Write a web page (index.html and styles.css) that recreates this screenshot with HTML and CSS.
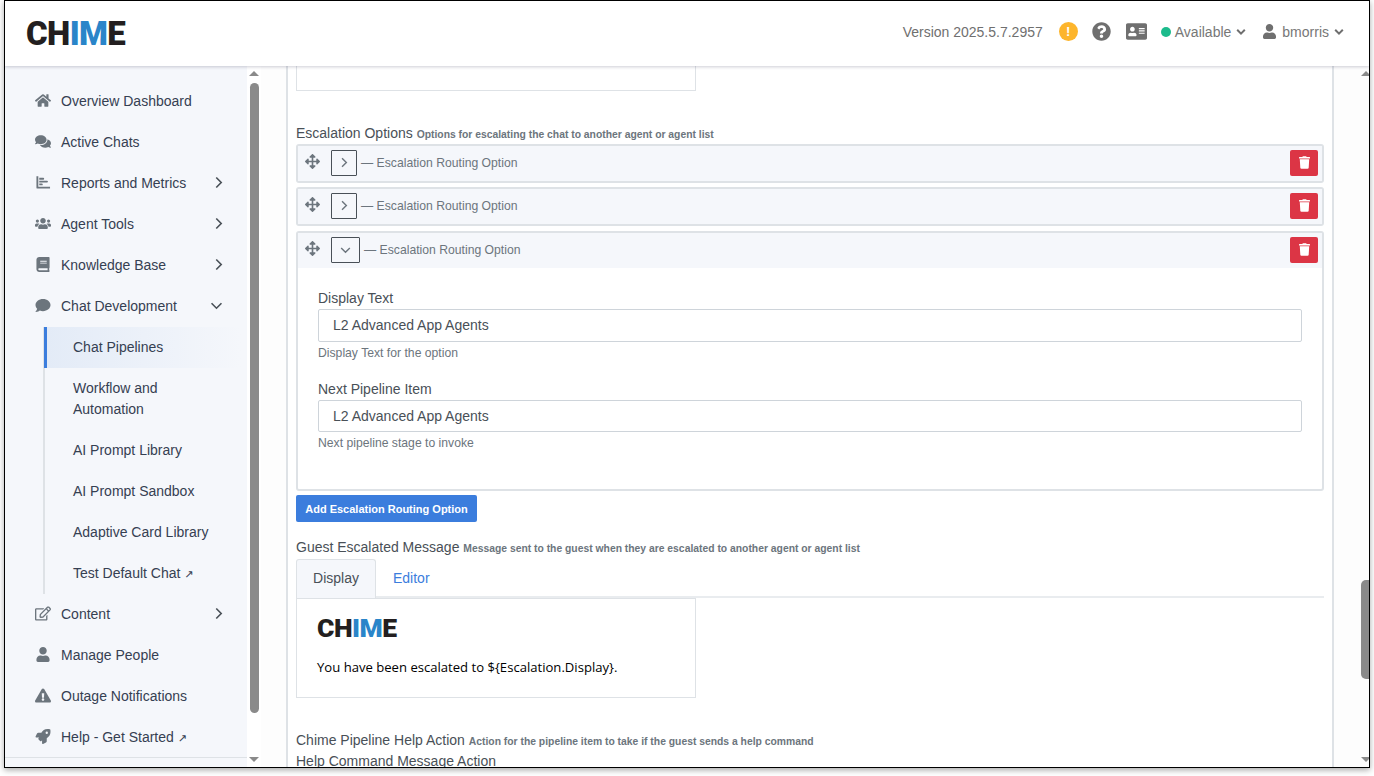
FILE: index.html
```html
<!DOCTYPE html>
<html lang="en">
<head>
<meta charset="utf-8">
<title>Chime</title>
<link rel="stylesheet" href="styles.css">
</head>
<body>
<svg class="defs" aria-hidden="true">
<symbol id="i-home" viewBox="0 0 576 512"><path d="M280.37 148.26L96 300.11V464a16 16 0 0 0 16 16l112.06-.29a16 16 0 0 0 15.92-16V368a16 16 0 0 1 16-16h64a16 16 0 0 1 16 16v95.64a16 16 0 0 0 16 16.05L464 480a16 16 0 0 0 16-16V300L295.67 148.26a12.19 12.19 0 0 0-15.3 0zM571.6 251.47L488 182.56V44.05a12 12 0 0 0-12-12h-56a12 12 0 0 0-12 12v72.61L318.47 43a48 48 0 0 0-61 0L4.34 251.47a12 12 0 0 0-1.6 16.9l25.5 31A12 12 0 0 0 45.15 301l235.22-193.74a12.19 12.19 0 0 1 15.3 0L530.9 301a12 12 0 0 0 16.9-1.6l25.5-31a12 12 0 0 0-1.7-16.93z"/></symbol>
<symbol id="i-comments" viewBox="0 0 576 512"><path d="M416 192c0-88.4-93.1-160-208-160S0 103.6 0 192c0 34.3 14.1 65.9 38 92-13.4 30.2-35.5 54.2-35.8 54.5-2.2 2.3-2.8 5.7-1.5 8.7S4.8 352 8 352c36.6 0 66.9-12.3 88.7-25 32.2 15.7 70.3 25 111.3 25 114.9 0 208-71.6 208-160zm122 220c23.9-26 38-57.7 38-92 0-66.9-53.5-124.2-129.3-148.1.9 6.6 1.3 13.3 1.3 20.1 0 105.9-107.7 192-240 192-10.8 0-21.3-.8-31.7-1.9C207.8 439.6 281.8 480 368 480c41 0 79.1-9.2 111.3-25 21.8 12.7 52.1 25 88.7 25 3.2 0 6.1-1.9 7.3-4.8 1.3-2.9.7-6.3-1.5-8.7-.3-.3-22.4-24.2-35.8-54.5z"/></symbol>
<symbol id="i-chart" viewBox="0 0 512 512"><path d="M32 40h64v360h400v64H64a32 32 0 0 1-32-32z"/><path d="M128 96h136a24 24 0 0 1 0 64H128zM128 192h264a24 24 0 0 1 0 64H128zM128 288h88a24 24 0 0 1 0 64h-88z"/></symbol>
<symbol id="i-users" viewBox="0 0 640 512"><path d="M96 224c35.3 0 64-28.7 64-64s-28.7-64-64-64-64 28.7-64 64 28.7 64 64 64zm448 0c35.3 0 64-28.7 64-64s-28.7-64-64-64-64 28.7-64 64 28.7 64 64 64zm32 32h-64c-17.6 0-33.5 7.1-45.1 18.6 40.3 22.1 68.9 62 75.1 109.4h66c17.7 0 32-14.3 32-32v-32c0-35.3-28.7-64-64-64zm-256 0c61.9 0 112-50.1 112-112S381.9 32 320 32 208 82.1 208 144s50.1 112 112 112zm76.8 32h-8.3c-20.8 10-43.9 16-68.5 16s-47.6-6-68.5-16h-8.3C179.6 288 128 339.6 128 403.2V432c0 26.5 21.5 48 48 48h288c26.5 0 48-21.5 48-48v-28.8c0-63.6-51.6-115.2-115.2-115.2zm-223.7-13.4C161.5 263.1 145.6 256 128 256H64c-35.3 0-64 28.7-64 64v32c0 17.7 14.3 32 32 32h65.9c6.3-47.4 34.9-87.3 75.2-109.4z"/></symbol>
<symbol id="i-book" viewBox="0 0 448 512"><path d="M448 360V24c0-13.3-10.7-24-24-24H96C43 0 0 43 0 96v320c0 53 43 96 96 96h328c13.3 0 24-10.7 24-24v-16c0-7.5-3.5-14.3-8.9-18.7-4.2-15.4-4.2-59.3 0-74.7 5.4-4.3 8.9-11.1 8.9-18.6zM128 134c0-3.3 2.7-6 6-6h212c3.3 0 6 2.7 6 6v20c0 3.3-2.7 6-6 6H134c-3.3 0-6-2.7-6-6v-20zm0 64c0-3.3 2.7-6 6-6h212c3.3 0 6 2.7 6 6v20c0 3.3-2.7 6-6 6H134c-3.3 0-6-2.7-6-6v-20zm253.4 250H96c-17.7 0-32-14.3-32-32 0-17.6 14.4-32 32-32h285.4c-1.9 17.1-1.9 46.9 0 64z"/></symbol>
<symbol id="i-comment" viewBox="0 0 512 512"><path d="M256 32C114.6 32 0 125.1 0 240c0 49.6 21.4 95 57 130.7C44.5 421.1 2.7 466 2.2 466.5c-2.2 2.3-2.8 5.7-1.5 8.7S4.8 480 8 480c66.3 0 116-31.8 140.6-51.4 32.7 12.3 69 19.4 107.4 19.4 141.4 0 256-93.1 256-208S397.4 32 256 32z"/></symbol>
<symbol id="i-edit" viewBox="0 0 576 512"><path d="M402.3 344.9l32-32c5-5 13.7-1.5 13.7 5.7V464c0 26.5-21.5 48-48 48H48c-26.5 0-48-21.5-48-48V112c0-26.5 21.5-48 48-48h273.5c7.1 0 10.7 8.6 5.7 13.7l-32 32c-1.5 1.5-3.5 2.3-5.7 2.3H48v352h352V350.5c0-2.1.8-4.1 2.3-5.6zm156.6-201.8L296.3 405.7l-90.4 10c-26.2 2.9-48.5-19.2-45.6-45.6l10-90.4L432.9 17.1c22.9-22.9 59.9-22.9 82.7 0l43.2 43.2c22.9 22.9 22.9 60 .1 82.8zM460.1 174L402 115.9 216.2 301.8l-7.3 65.3 65.3-7.3L460.1 174zm64.8-79.7l-43.2-43.2c-4.1-4.1-10.8-4.1-14.8 0L436 82l58.1 58.1 30.9-30.9c4-4.2 4-10.8-.1-14.9z"/></symbol>
<symbol id="i-user" viewBox="0 0 448 512"><path d="M224 256c70.7 0 128-57.3 128-128S294.7 0 224 0 96 57.3 96 128s57.3 128 128 128zm89.6 32h-16.7c-22.2 10.2-46.9 16-72.9 16s-50.6-5.8-72.9-16h-16.7C60.2 288 0 348.2 0 422.4V464c0 26.5 21.5 48 48 48h352c26.5 0 48-21.5 48-48v-41.6c0-74.2-60.2-134.4-134.4-134.4z"/></symbol>
<symbol id="i-warn" viewBox="0 0 576 512"><path d="M569.517 440.013C587.975 472.007 564.806 512 527.94 512H48.054c-36.937 0-59.999-40.055-41.577-71.987L246.423 24.028c18.467-32.009 64.72-31.951 83.154 0l239.94 416.000zM288 354c-25.405 0-46 20.595-46 46s20.595 46 46 46 46-20.595 46-46-20.595-46-46-46zm-43.673-165.346l7.418 136c.347 6.364 5.609 11.346 11.982 11.346h48.546c6.373 0 11.635-4.982 11.982-11.346l7.418-136c.375-6.874-5.098-12.654-11.982-12.654h-63.383c-6.884 0-12.356 5.78-11.981 12.654z"/></symbol>
<symbol id="i-rocket" viewBox="0 0 512 512"><path d="M505.12019,19.09375c-1.18945-5.53125-6.65819-11-12.207-12.1875C460.716,0,435.507,0,410.40747,0,307.17523,0,245.26909,55.20312,199.05238,128H94.83772c-16.34763.01562-35.55658,11.875-42.88664,26.48438L2.51562,253.29688A28.4,28.4,0,0,0,0,264a24.00867,24.00867,0,0,0,24.00582,24H127.81618l-22.47457,22.46875c-11.36521,11.36133-12.99607,32.25781,0,45.25L156.24582,406.625c11.15623,11.1875,32.15619,13.15625,45.27726,0l22.47457-22.46875V488a24.00867,24.00867,0,0,0,24.00581,24,28.55934,28.55934,0,0,0,10.707-2.51562l98.72834-49.39063c14.62888-7.29687,26.50776-26.5,26.50776-42.85937V312.79688c72.59753-46.3125,128.03493-108.40626,128.03493-211.09376C512.07526,76.5,512.07526,51.29688,505.12019,19.09375ZM384.04033,168A40,40,0,1,1,424.05,128,40.02322,40.02322,0,0,1,384.04033,168Z"/></symbol>
<symbol id="i-move" viewBox="0 0 512 512"><path d="M352.201 425.775l-79.196 79.196c-9.373 9.373-24.568 9.373-33.941 0l-79.196-79.196c-15.119-15.119-4.411-40.971 16.971-40.97h51.162L228 284H127.196v51.162c0 21.382-25.851 32.09-40.971 16.971L7.029 272.937c-9.373-9.373-9.373-24.569 0-33.941L86.225 159.8c15.119-15.119 40.971-4.411 40.971 16.971V228H228V127.196h-51.23c-21.382 0-32.09-25.851-16.971-40.971l79.196-79.196c9.373-9.373 24.568-9.373 33.941 0l79.196 79.196c15.119 15.119 4.411 40.971-16.971 40.971h-51.162V228h100.804v-51.162c0-21.382 25.851-32.09 40.97-16.971l79.196 79.196c9.373 9.373 9.373 24.569 0 33.941L425.773 352.2c-15.119 15.119-40.971 4.411-40.97-16.971V284H284v100.804h51.23c21.382 0 32.09 25.851 16.971 40.971z"/></symbol>
<symbol id="i-trash" viewBox="0 0 448 512"><path d="M432 32H312l-9.4-18.7A24 24 0 0 0 281.1 0H166.8a23.72 23.72 0 0 0-21.4 13.3L136 32H16A16 16 0 0 0 0 48v32a16 16 0 0 0 16 16h416a16 16 0 0 0 16-16V48a16 16 0 0 0-16-16zM53.2 467a48 48 0 0 0 47.9 45h245.8a48 48 0 0 0 47.9-45L416 128H32z"/></symbol>
<symbol id="i-question" viewBox="0 0 512 512"><path d="M504 256c0 136.997-111.043 248-248 248S8 392.997 8 256C8 119.083 119.043 8 256 8s248 111.083 248 248zM262.655 90c-54.497 0-89.255 22.957-116.549 63.758-3.536 5.286-2.353 12.415 2.715 16.258l34.699 26.31c5.205 3.947 12.621 3.008 16.665-2.122 17.864-22.658 30.113-35.797 57.303-35.797 20.429 0 45.698 13.148 45.698 32.958 0 14.976-12.363 22.667-32.534 33.976C247.128 238.528 216 254.941 216 296v4c0 6.627 5.373 12 12 12h56c6.627 0 12-5.373 12-12v-1.333c0-28.462 83.186-29.647 83.186-106.667 0-58.002-60.165-102-116.531-102zM256 338c-25.365 0-46 20.635-46 46 0 25.364 20.635 46 46 46s46-20.636 46-46c0-25.365-20.635-46-46-46z"/></symbol>
<symbol id="i-idcard" viewBox="0 0 576 512"><path d="M528 32H48C21.5 32 0 53.5 0 80v352c0 26.5 21.5 48 48 48h480c26.5 0 48-21.5 48-48V80c0-26.5-21.5-48-48-48zm-352 96c35.3 0 64 28.7 64 64s-28.7 64-64 64-64-28.7-64-64 28.7-64 64-64zm112 236.8c0 10.6-10 19.2-22.4 19.2H86.4C74 384 64 375.4 64 364.8v-19.2c0-31.8 30.1-57.6 67.2-57.6h5c12.3 5.1 25.7 8 39.8 8s27.6-2.9 39.8-8h5c37.1 0 67.2 25.8 67.2 57.6v19.2zM512 312c0 4.4-3.6 8-8 8H360c-4.4 0-8-3.6-8-8v-16c0-4.4 3.6-8 8-8h144c4.4 0 8 3.6 8 8v16zm0-64c0 4.4-3.6 8-8 8H360c-4.4 0-8-3.6-8-8v-16c0-4.4 3.6-8 8-8h144c4.4 0 8 3.6 8 8v16zm0-64c0 4.4-3.6 8-8 8H360c-4.4 0-8-3.6-8-8v-16c0-4.4 3.6-8 8-8h144c4.4 0 8 3.6 8 8v16z"/></symbol>
<symbol id="i-right" viewBox="0 0 10 14"><path d="M2.500 1.500 8 7l-5.500 5.500" fill="none" stroke="currentColor" stroke-width="1.800"/></symbol>
<symbol id="i-down" viewBox="0 0 14 10"><path d="M1.500 2.500 7 8l5.500-5.500" fill="none" stroke="currentColor" stroke-width="1.800"/></symbol>
<symbol id="i-caret" viewBox="0 0 10 8"><path d="M1.200 1.800 5 5.600l3.800-3.800" fill="none" stroke="currentColor" stroke-width="2"/></symbol>
</svg>

<div class="window">
  <header class="topbar">
    <div class="logo">CH<span class="logo-blue">IM</span>E</div>
    <div class="top-right">
      <span class="version">Version 2025.5.7.2957</span>
      <span class="alert">!</span>
      <svg class="ico-question"><use href="#i-question"/></svg>
      <svg class="ico-idcard"><use href="#i-idcard"/></svg>
      <span class="dot"></span>
      <span class="top-text">Available</span>
      <svg class="ico-caret"><use href="#i-caret"/></svg>
      <svg class="ico-topuser"><use href="#i-user"/></svg>
      <span class="top-text">bmorris</span>
      <svg class="ico-caret ico-caret-last"><use href="#i-caret"/></svg>
    </div>
  </header>

  <div class="shell">
    <aside class="sidebar">
      <nav class="nav">
        <a class="nav-item"><svg class="nav-ico"><use href="#i-home"/></svg>Overview Dashboard</a>
        <a class="nav-item"><svg class="nav-ico"><use href="#i-comments"/></svg>Active Chats</a>
        <a class="nav-item"><svg class="nav-ico"><use href="#i-chart"/></svg>Reports and Metrics<svg class="chev"><use href="#i-right"/></svg></a>
        <a class="nav-item"><svg class="nav-ico"><use href="#i-users"/></svg>Agent Tools<svg class="chev"><use href="#i-right"/></svg></a>
        <a class="nav-item"><svg class="nav-ico"><use href="#i-book"/></svg>Knowledge Base<svg class="chev"><use href="#i-right"/></svg></a>
        <a class="nav-item"><svg class="nav-ico"><use href="#i-comment"/></svg>Chat Development<svg class="chev-down"><use href="#i-down"/></svg></a>
        <div class="subnav">
          <a class="sub-item sub-active">Chat Pipelines</a>
          <a class="sub-item">Workflow and<br>Automation</a>
          <a class="sub-item">AI Prompt Library</a>
          <a class="sub-item">AI Prompt Sandbox</a>
          <a class="sub-item">Adaptive Card Library</a>
          <a class="sub-item">Test Default Chat <span class="ext">↗</span></a>
        </div>
        <a class="nav-item"><svg class="nav-ico"><use href="#i-edit"/></svg>Content<svg class="chev"><use href="#i-right"/></svg></a>
        <a class="nav-item"><svg class="nav-ico"><use href="#i-user"/></svg>Manage People</a>
        <a class="nav-item"><svg class="nav-ico"><use href="#i-warn"/></svg>Outage Notifications</a>
        <a class="nav-item"><svg class="nav-ico"><use href="#i-rocket"/></svg><span>Help - Get Started <span class="ext">↗</span></span></a>
      </nav>
    </aside>
    <div class="scrollbar scrollbar-side">
      <span class="arrow-up"></span>
      <span class="thumb thumb-side"></span>
      <span class="arrow-down"></span>
    </div>

    <main class="main">
      <div class="page">
        <div class="stub"></div>

        <div class="label label-first">Escalation Options <small class="hint">Options for escalating the chat to another agent or agent list</small></div>

        <section class="opt opt-first">
          <div class="opt-head">
            <svg class="ico-move"><use href="#i-move"/></svg>
            <span class="toggle"><svg class="tog-right"><use href="#i-right"/></svg></span>
            <span class="opt-title">— Escalation Routing Option</span>
            <span class="del"><svg class="ico-trash"><use href="#i-trash"/></svg></span>
          </div>
        </section>
        <section class="opt">
          <div class="opt-head">
            <svg class="ico-move"><use href="#i-move"/></svg>
            <span class="toggle"><svg class="tog-right"><use href="#i-right"/></svg></span>
            <span class="opt-title">— Escalation Routing Option</span>
            <span class="del"><svg class="ico-trash"><use href="#i-trash"/></svg></span>
          </div>
        </section>
        <section class="opt opt-open">
          <div class="opt-head">
            <svg class="ico-move"><use href="#i-move"/></svg>
            <span class="toggle toggle-open"><svg class="tog-down"><use href="#i-down"/></svg></span>
            <span class="opt-title">— Escalation Routing Option</span>
            <span class="del"><svg class="ico-trash"><use href="#i-trash"/></svg></span>
          </div>
          <div class="opt-body">
            <div class="field">
              <div class="field-label">Display Text</div>
              <div class="input">L2 Advanced App Agents</div>
              <div class="field-help">Display Text for the option</div>
            </div>
            <div class="field">
              <div class="field-label">Next Pipeline Item</div>
              <div class="input">L2 Advanced App Agents</div>
              <div class="field-help">Next pipeline stage to invoke</div>
            </div>
          </div>
        </section>

        <button class="add-btn" type="button">Add Escalation Routing Option</button>

        <div class="label label-guest">Guest Escalated Message <small class="hint">Message sent to the guest when they are escalated to another agent or agent list</small></div>

        <div class="tabs">
          <span class="tab tab-active">Display</span>
          <span class="tab">Editor</span>
        </div>
        <div class="preview">
          <div class="logo logo-small">CH<span class="logo-blue">IM</span>E</div>
          <p class="preview-text">You have been escalated to ${Escalation.Display}.</p>
        </div>

        <div class="label label-help">Chime Pipeline Help Action <small class="hint">Action for the pipeline item to take if the guest sends a help command</small></div>
        <div class="label label-next">Help Command Message Action</div>
      </div>
      <div class="scrollbar scrollbar-main">
        <span class="arrow-up"></span>
        <span class="thumb thumb-main"></span>
        <span class="arrow-down"></span>
      </div>
    </main>
  </div>
</div>
</body>
</html>
```
FILE: styles.css
```css
* { box-sizing: border-box; }
html, body { margin: 0; height: 100%; overflow: hidden; background: #fff; }
body { font-family: "Liberation Sans", Arial, sans-serif; font-size: 14px; color: #495057; }
.defs { width: 0; height: 0; position: absolute; }
svg { fill: currentColor; display: block; flex: none; }

.window {
  width: 1366px; height: 768px; margin-left: 4px;
  border: 1px solid #000;
  box-shadow: 0 2px 6px rgba(0,0,0,.35);
  background: #fff; display: flex; flex-direction: column; overflow: hidden;
}

.topbar {
  height: 65px; flex: none; display: flex; align-items: center; justify-content: space-between;
  padding: 0 25px 0 21px; background: #fff;
  box-shadow: 0 1px 3px rgba(60,60,90,.25); position: relative; z-index: 2;
}
.logo { font-family: Roboto, "Liberation Sans", sans-serif; font-weight: 900; font-size: 33px; line-height: 36px; color: #231f20; letter-spacing: -.6px; }
.logo-blue { color: #2a85c9; }
.logo-small { font-size: 26.5px; line-height: 24px; letter-spacing: -.5px; }

.top-right { display: flex; align-items: center; color: #6f6f6f; padding-bottom: 4px; }
.version { margin-right: 16px; }
.alert { width: 19px; height: 19px; border-radius: 50%; background: #fdb52c; color: #fff; font-weight: 700; font-size: 13px; line-height: 19px; text-align: center; margin-right: 14px; }
.ico-question { width: 19px; height: 19px; margin-right: 15px; }
.ico-idcard { width: 21px; height: 19px; margin-right: 14px; }
.dot { width: 10px; height: 10px; border-radius: 50%; background: #1cbb8c; margin-right: 4px; }
.top-text { color: #777; }
.ico-caret { width: 10px; height: 8px; margin-left: 5px; margin-right: 17px; }
.ico-caret-last { margin-right: 0; }
.ico-topuser { width: 13px; height: 15px; margin-right: 6px; }

.shell { flex: 1; min-height: 0; display: flex; }
.sidebar { width: 242px; flex: none; background: #f5f7fb; position: relative; overflow: hidden; }
.sidebar::after { content: ""; position: absolute; left: 0; right: 0; bottom: 9px; height: 1px; background: #dee2e6; }
.nav { padding-top: 15px; color: #354052; }
.nav-item { display: flex; align-items: center; height: 41px; padding: 0 0 2px 30px; position: relative; }
.nav-ico { width: 16px; height: 15px; margin-right: 10px; color: #6c757d; }
.chev { width: 9px; height: 13px; color: #495057; position: absolute; left: 209px; top: 13px; }
.chev-down { width: 13px; height: 9px; color: #495057; position: absolute; left: 205px; top: 15px; }
.subnav { margin-left: 38px; border-left: 2px solid #dee2e6; }
.sub-item { display: block; padding: 10px 0 10px 29px; line-height: 21px; margin-left: -1px; }
.sub-active { border-left: 3px solid #3b7ddd; padding-left: 26px; background: linear-gradient(90deg, #e3ebf7, #f5f7fb); width: 197px; }
.ext { font-family: "DejaVu Sans", sans-serif; font-size: 11px; line-height: 0; }

.scrollbar { position: relative; flex: none; background: #fff; }
.scrollbar-side { width: 14px; }
.scrollbar-main { width: 9px; background: #fdfdfd; }
.thumb { position: absolute; background: #8a8a8a; border-radius: 5px; }
.thumb-side { left: 3px; width: 9px; top: 17px; height: 630px; }
.thumb-main { left: 1px; width: 9px; top: 514px; height: 99px; border-radius: 5px 0 0 5px; }
.arrow-up, .arrow-down { position: absolute; left: 2px; width: 0; height: 0; border-left: 5px solid transparent; border-right: 5px solid transparent; }
.arrow-up { top: 5px; border-bottom: 5px solid #8a8a8a; }
.arrow-down { bottom: 5px; border-top: 5px solid #8a8a8a; }
.scrollbar-main .arrow-up, .scrollbar-main .arrow-down { left: 1px; }

.main { flex: 1; min-width: 0; display: flex; overflow: hidden; background: #fdfdfd; padding-left: 25px; justify-content: space-between; }
.page { width: 1048px; height: 100%; overflow: hidden; border: solid #dee2e6; border-width: 0 2px; background: #fff; padding: 0 8px 0 8px; }

.stub { width: 400px; height: 25px; border: 1px solid #dee2e6; border-top: 0; }
.label { height: 21px; line-height: 21px; white-space: nowrap; color: #495057; }
.hint { font-size: 10.350px; font-weight: 700; color: #6c757d; }
.label-first { margin-top: 32px; }
.label-guest { margin-top: 15px; margin-bottom: 1px; }
.label-help { margin-top: 32px; }

.opt { border: 2px solid #dee2e6; border-radius: 3px; background: #f5f7fb; height: 39px; margin-top: 4px; width: 1028px; }
.opt-first { margin-top: 0; }
.opt-open { height: 260px; margin-top: 5px; background: #fff; }
.opt-head { height: 35px; background: #f5f7fb; display: flex; align-items: center; padding: 0 4px 2px 7px; }
.ico-move { width: 15px; height: 15px; color: #6c757d; margin: -2px 11px 0 0; }
.toggle { width: 26px; height: 26px; border: 1px solid #495057; border-radius: 1px; display: flex; align-items: center; justify-content: center; color: #6c757d; margin-right: 4px; background: transparent; }
.toggle-open { width: 29px; height: 26px; }
.tog-right { width: 8px; height: 11px; }
.tog-down { width: 11px; height: 8px; }
.opt-title { font-size: 12.200px; color: #6c757d; flex: 1; }
.del { width: 28px; height: 26px; background: #dc3545; border-radius: 2px; display: flex; align-items: center; justify-content: center; color: #fff; }
.ico-trash { width: 11px; height: 13px; }

.opt-body { padding: 20px 20px 0; }
.field { margin-bottom: 17px; }
.field-label { line-height: 21px; }
.input { height: 33px; width: 984px; border: 1px solid #ced4da; border-radius: 2px; background: #fff; padding: 0 14px; line-height: 31px; }
.field-help { font-size: 12.200px; line-height: 18px; margin-top: 2px; color: #6c757d; }
.field + .field .input { height: 32px; line-height: 30px; }

.add-btn { display: block; margin: 4px 0 0; width: 181px; height: 27px; padding: 0; border: 0; border-radius: 2px; background: #3b7ddd; color: #fff; font: 700 11px "Liberation Sans", Arial, sans-serif; }

.tabs { display: flex; height: 39px; width: 1028px; border-bottom: 2px solid #e9ecef; position: relative; }
.tab { padding: 0 17px; line-height: 38px; color: #3b7ddd; }
.tab-active { width: 80px; padding: 0; text-align: center; height: 39px; line-height: 37px; background: #f5f7fb; border: 1px solid #dee2e6; border-bottom: 0; border-radius: 3px 3px 0 0; color: #495057; }

.preview { width: 400px; height: 100px; border: 1px solid #dee2e6; padding: 17px 20px; }
.preview-text { margin: 17px 0 0; font-family: "Open Sans", "Noto Sans", sans-serif; font-size: 13.100px; line-height: 21px; color: #000; }
```
